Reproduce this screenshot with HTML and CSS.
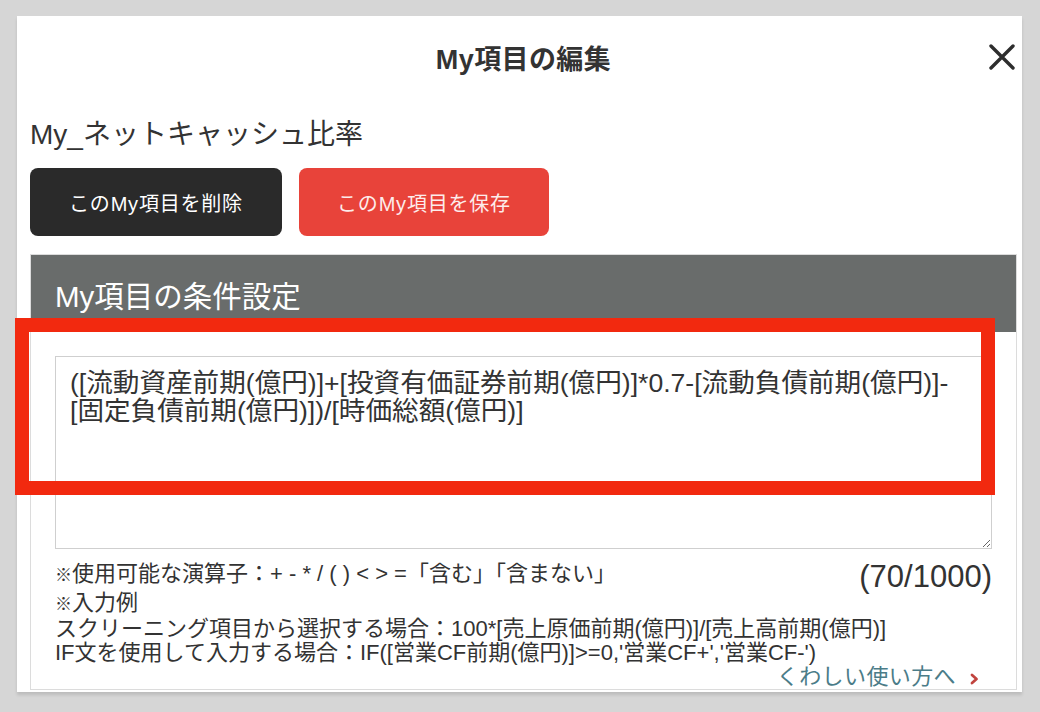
FILE: index.html
```html
<!DOCTYPE html>
<html lang="ja">
<head>
<meta charset="utf-8">
<title>My項目の編集</title>
<link rel="stylesheet" href="styles.css">
</head>
<body>
<div class="modal">
  <header class="modal-head">
    <span class="spacer"></span>
    <h1 class="title">My項目の編集</h1>
    <button class="close" type="button" aria-label="閉じる">
      <svg width="26" height="26" viewBox="0 0 26 26"><path d="M2 2 L24 24 M24 2 L2 24" stroke="#2d2d2d" stroke-width="3.4" stroke-linecap="round"/></svg>
    </button>
  </header>
  <h2 class="item-name">My_ネットキャッシュ比率</h2>
  <div class="actions">
    <button class="btn btn-dark" type="button">このMy項目を削除</button>
    <button class="btn btn-red" type="button">このMy項目を保存</button>
  </div>
  <section class="panel">
    <div class="panel-head">My項目の条件設定</div>
    <div class="panel-body">
      <textarea class="formula" spellcheck="false">([流動資産前期(億円)]+[投資有価証券前期(億円)]*0.7-[流動負債前期(億円)]-[固定負債前期(億円)])/[時価総額(億円)]</textarea>
      <div class="note-row">
        <p class="note"><span class="kome">※</span>使用可能な演算子：+ - * / ( ) &lt; &gt; =「含む」「含まない」</p>
        <span class="counter">(70/1000)</span>
      </div>
      <p class="note"><span class="kome">※</span>入力例</p>
      <p class="note">スクリーニング項目から選択する場合：100*[売上原価前期(億円)]/[売上高前期(億円)]</p>
      <p class="note">IF文を使用して入力する場合：IF([営業CF前期(億円)]&gt;=0,'営業CF+','営業CF-')</p>
      <div class="link-row">
        <a class="help-link" href="#">くわしい使い方へ</a>
        <svg class="chev" width="9" height="12" viewBox="0 0 9 12"><path d="M2 2 L6.5 6 L2 10" fill="none" stroke="#c1443f" stroke-width="2.8" stroke-linecap="round" stroke-linejoin="round"/></svg>
      </div>
    </div>
  </section>
</div>
<div class="highlight" aria-hidden="true"></div>
</body>
</html>
```

FILE: styles.css
```css
html, body {
  margin: 0;
  padding: 0;
}

body {
  background: #d6d6d6;
  width: 1040px;
  height: 712px;
  box-sizing: border-box;
  padding: 16px 18px 0 17px;
  font-family: "Liberation Sans", "Noto Sans CJK JP", sans-serif;
  color: #333;
  position: relative;
  overflow: hidden;
}

.modal {
  width: 1005px;
  height: 676px;
  background: #fff;
  box-sizing: border-box;
  padding: 0 5px 0 13px;
  box-shadow: 0 3px 3px rgba(0, 0, 0, 0.12);
  display: flex;
  flex-direction: column;
}

.modal-head {
  height: 82px;
  display: grid;
  grid-template-columns: 1fr auto 1fr;
  align-items: center;
}

.title {
  margin: 0;
  font-size: 27px;
  font-weight: 700;
  color: #333;
  letter-spacing: 0.4px;
}

.close {
  justify-self: end;
  margin-right: 2px;
  border: 0;
  padding: 0;
  background: none;
  width: 26px;
  height: 26px;
  display: flex;
}

.item-name {
  margin: 19px 0 0;
  font-size: 28px;
  line-height: 36px;
  font-weight: 400;
  color: #333;
}

.actions {
  margin-top: 15px;
  display: flex;
  gap: 17px;
}

.btn {
  height: 68px;
  border: 0;
  border-radius: 8px;
  font-family: inherit;
  font-size: 20px;
  font-weight: 400;
  letter-spacing: 0.8px;
}

.btn-dark {
  width: 252px;
  background: #2a2a2a;
  color: #fff;
}

.btn-red {
  width: 250px;
  background: #e8433a;
  color: #fdeceb;
}

.panel {
  margin-top: 18px;
  border: 1px solid #dcdcdc;
  height: 436px;
  box-sizing: border-box;
  display: flex;
  flex-direction: column;
}

.panel-head {
  height: 78px;
  background: #696c6b;
  color: #fff;
  font-size: 29.5px;
  display: flex;
  align-items: center;
  padding-left: 24px;
}

.panel-body {
  padding: 24px 24px 0;
}

.formula {
  display: block;
  width: 937px;
  height: 193px;
  box-sizing: border-box;
  margin: 0;
  border: 1px solid #cfcfcf;
  border-radius: 0;
  padding: 12px 14px;
  font-family: inherit;
  font-size: 26.6px;
  line-height: 28px;
  color: #333;
  resize: vertical;
  outline: none;
  word-break: keep-all;
}

.note-row {
  margin-top: 10px;
  height: 32px;
  display: flex;
  justify-content: space-between;
  align-items: center;
}

.note {
  margin: 0;
  font-size: 22px;
  line-height: 24px;
  color: #333;
}

.kome {
  font-size: 17px;
}

.counter {
  font-size: 31px;
  color: #333;
  padding-top: 4px;
}

.link-row {
  display: flex;
  justify-content: flex-end;
  align-items: center;
  gap: 14px;
  padding-right: 13px;
  height: 24px;
}

.help-link {
  font-size: 22px;
  line-height: 24px;
  color: #4b7c88;
  text-decoration: none;
  letter-spacing: 0.4px;
}

.chev {
  margin-top: 4px;
}

.highlight {
  position: absolute;
  left: 15px;
  top: 318px;
  width: 980px;
  height: 177px;
  box-sizing: border-box;
  border: 14px solid #f2290f;
  pointer-events: none;
}
```
